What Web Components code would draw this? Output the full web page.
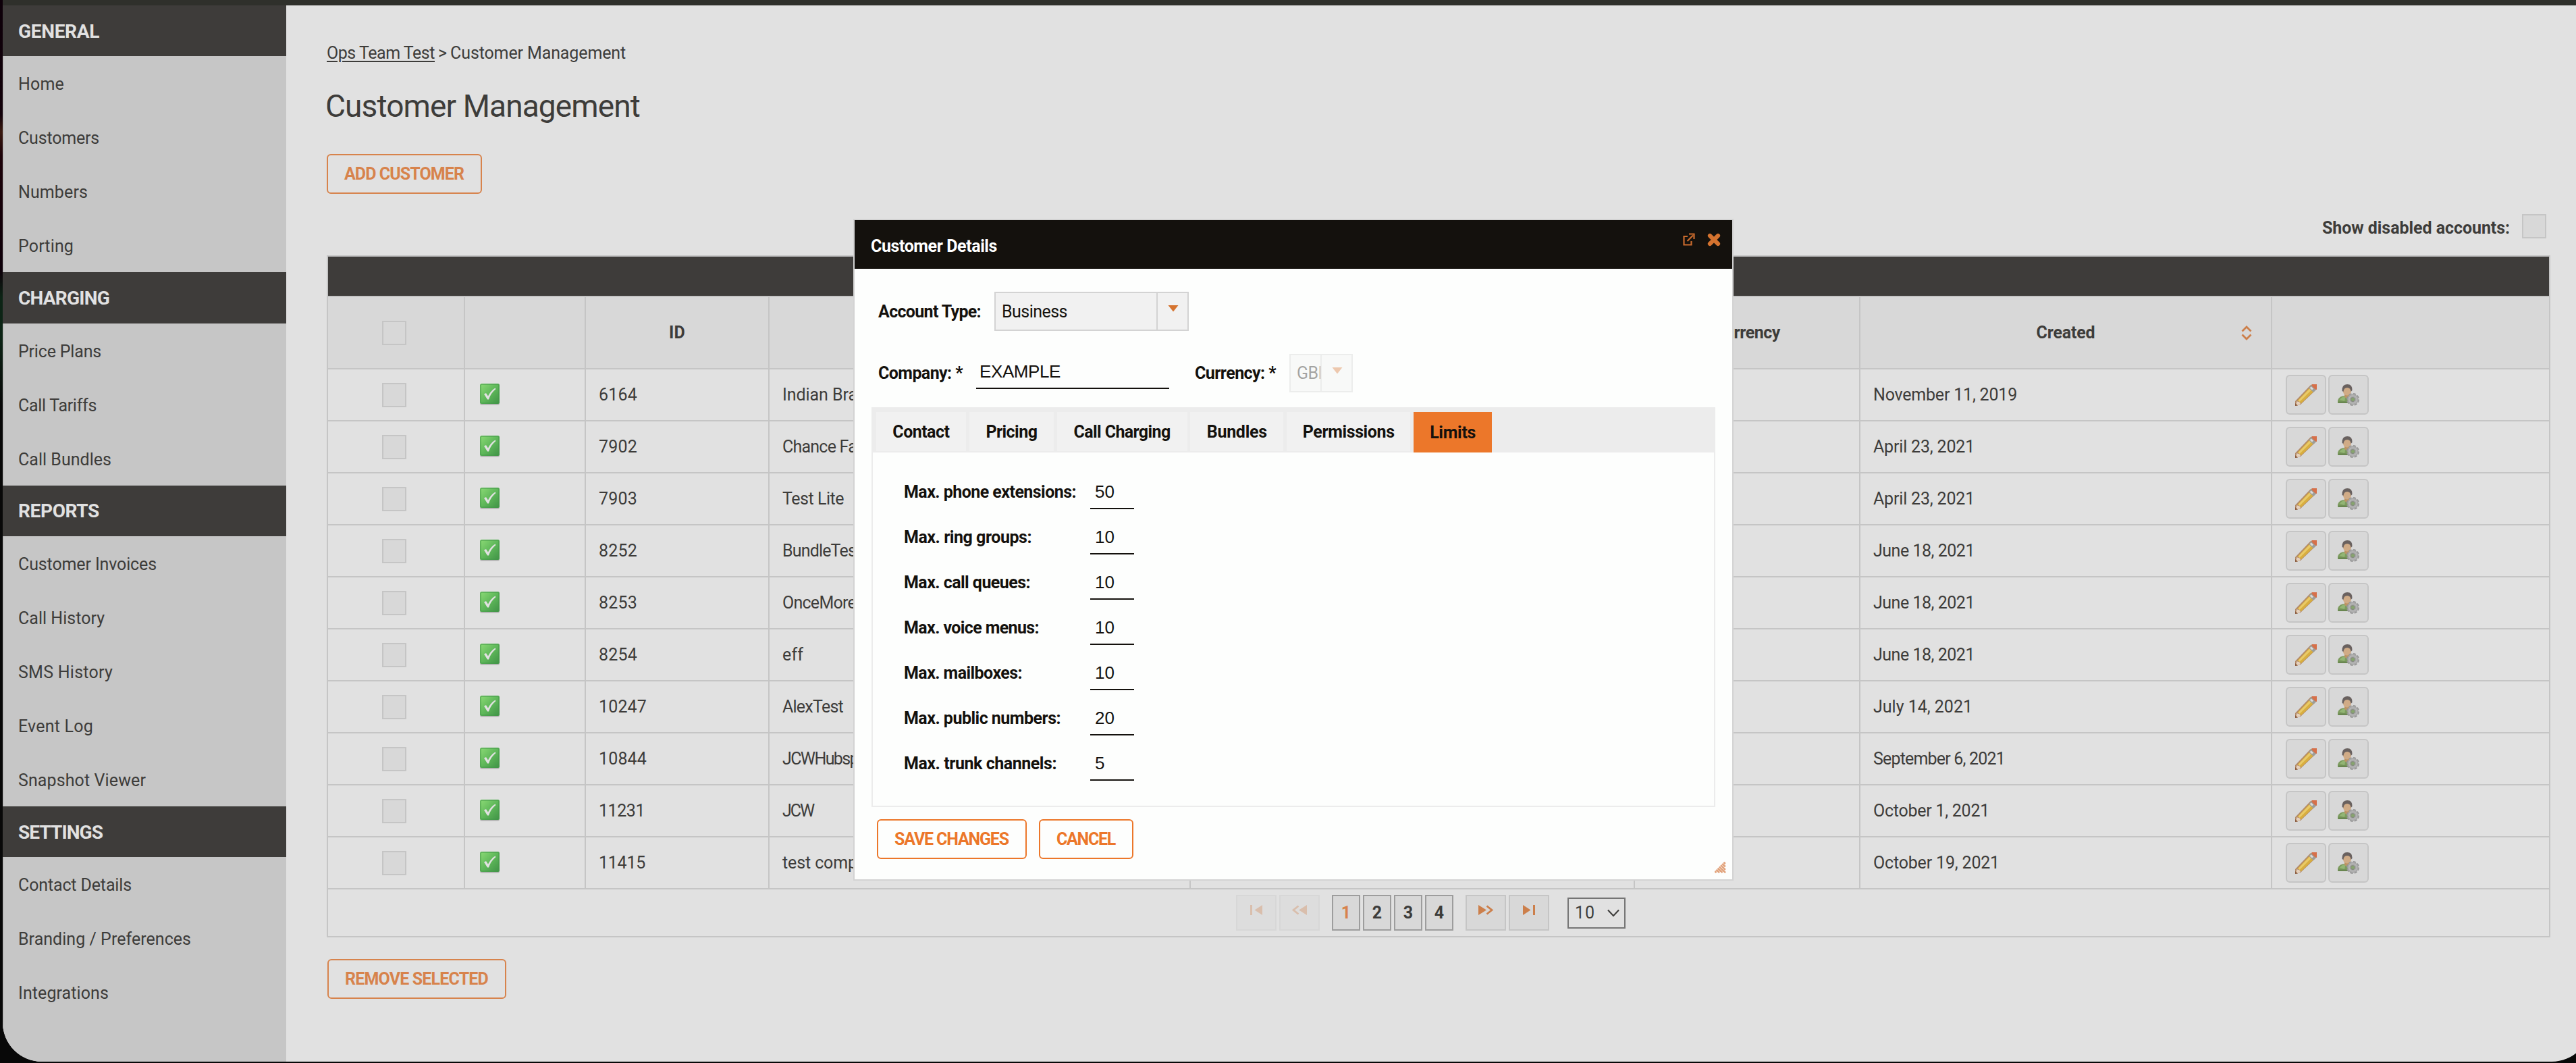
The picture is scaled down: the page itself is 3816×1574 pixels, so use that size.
<!DOCTYPE html>
<html lang="en">
<head>
<meta charset="utf-8">
<title>Customer Management</title>
<style>
body {
  margin: 0;
  background: #090909;
  font-family: Roboto, "Open Sans", sans-serif;
  font-size: 25px;
  color: #3d3c3a;
}
</style>
</head>
<body>
<admin-page></admin-page>
<script>
// Single line of text, tracked so that it fills the given width
class UiText extends HTMLElement {
  constructor() {
    super()
    this.attachShadow({ mode: "open" }).innerHTML = `
    <style>
    :host { display: inline-block; margin-left: -2px; white-space: nowrap; }
    </style><slot></slot>`
  }

  connectedCallback() {
    const width = Number(this.getAttribute("width"))
    const count = this.textContent.length
    if (!width || count < 2) return
    const natural = this.getBoundingClientRect().width
    this.style.letterSpacing = (width - natural + 2) / count + "px"
    this.style.width = width + "px"
  }
}

const icons = {
  check: `<svg width="32" height="34" viewBox="0 0 32 34">
    <defs><linearGradient id="g" x1="0" y1="0" x2="1" y2="1"><stop offset="0" stop-color="#8ddb76"/><stop offset=".5" stop-color="#5fb85a"/><stop offset="1" stop-color="#3f9146"/></linearGradient></defs>
    <rect x="1" y="2" width="29" height="30" rx="3" fill="#999" opacity=".55"/>
    <rect x="1" y="0" width="29" height="30" rx="2.5" fill="url(#g)"/>
    <rect x="2" y="1" width="27" height="28" rx="2" fill="none" stroke="#459a49" stroke-width="1.6" opacity=".65"/>
    <path d="M7 15.500l3-1.500 3 4.500q4-8 10.500-12l1 1.500Q17 14 14 23.500h-2z" fill="#e1e1e1"/></svg>`,
  pencil: `<svg width="32" height="32" viewBox="0 0 32 32">
    <path d="M0 32V25L22.500 1.500Q25 0 28 0h4v7L8 30z" fill="#b28a68"/>
    <path d="M1 31l1.500-5.500 5 4.500z" fill="#e8d6c0"/>
    <path d="M3 24.500L21 5.500l6 5.500L8.500 28.500Q7.500 25 3 24.500z" fill="#d8ae40"/>
    <path d="M4.500 24L21.500 6.500l2.500 2L6.500 26z" fill="#e9ca69"/>
    <path d="M2 25.500q4.500-.5 6 3L3 31z" fill="#e6d1bd"/>
    <path d="M0 32v-4l4 3.500z" fill="#8b5b3e"/>
    <path d="M20 5.500l4-4 7 6.500-4 4z" fill="#9c9d99"/>
    <path d="M21.700 5.600l2-2 3.300 3-2 2z" fill="#dcdcdc"/>
    <path d="M24.500 0H32v8q-2.500 0-5-3-2.500-2-2.500-5z" fill="#d6704a"/></svg>`,
  user: `<svg width="32" height="32" viewBox="0 0 32 32">
    <path d="M0 28V24q2-7 11-7h6q7 1 7 11z" fill="#7c9b5e"/>
    <path d="M3 23q3-5 9-5l-2 7z" fill="#92b574"/>
    <path d="M1 25.500h20V28H1z" fill="#698650"/>
    <path d="M10 15h8v4l-4 2-4-2z" fill="#bd9363"/>
    <circle cx="14" cy="10.500" r="6" fill="#d0ab86"/>
    <path d="M6.500 10Q6 0 14 0t7.500 9l-2 2Q19 5 14 5T8.500 11z" fill="#69615f"/>
    <circle cx="22.500" cy="22.500" r="8.300" fill="none" stroke="#969696" stroke-width="2.500" stroke-dasharray="4.200 2.320"/>
    <circle cx="22.500" cy="22.500" r="5.700" fill="none" stroke="#a7a7a7" stroke-width="5"/>
    <circle cx="22.500" cy="22.500" r="5.600" fill="none" stroke="#bababa" stroke-width="1.200"/>
    <circle cx="22.500" cy="22.500" r="3" fill="#87a46e" stroke="#858585"/></svg>`,
  sort: `<svg width="16" height="22" viewBox="0 0 16 22"><path d="M1.500 8.500L8 2l6.500 6.500M1.500 13.500L8 20l6.500-6.500" fill="none" stroke="#cc7f4b" stroke-width="2.800"/></svg>`,
  popout: `<svg width="18" height="19" viewBox="0 0 18 19"><path d="M7 5H1.500v12.500h11V12M6.500 12L15 3.500M9 1.500h7.500V9" fill="none" stroke="#c96b2d" stroke-width="2.200"/></svg>`,
  close: `<svg width="20" height="20" viewBox="0 0 20 20"><path d="M4 4l12 12M16 4L4 16" stroke="#d5732f" stroke-width="6.200" stroke-linecap="round"/></svg>`,
  down: `<svg width="16" height="10" viewBox="0 0 16 10"><path d="M.5 0h15L8 9.500z" fill="#d5732f"/></svg>`,
  first: `<svg width="20" height="18" viewBox="0 0 20 18"><path d="M1 1h3v15H1zM19 1v15L7.500 8.500z" fill="#cc7f4b"/></svg>`,
  prev: `<svg width="24" height="18" viewBox="0 0 24 18"><path d="M23 1v15L11 8.500z" fill="#cc7f4b"/><path d="M10.500 2.500l-7.500 6 7.500 6" fill="none" stroke="#cc7f4b" stroke-width="2.800"/></svg>`,
  next: `<svg width="24" height="18" viewBox="0 0 24 18"><path d="M1 1v15l12-7.500z" fill="#cc7f4b"/><path d="M13.500 2.500l7.500 6-7.500 6" fill="none" stroke="#cc7f4b" stroke-width="2.800"/></svg>`,
  last: `<svg width="20" height="18" viewBox="0 0 20 18"><path d="M16 1h3v15h-3zM1 1v15l11.500-7.500z" fill="#cc7f4b"/></svg>`,
  chevron: `<svg width="18" height="12" viewBox="0 0 18 12"><path d="M1 1.500l8 8.500 8-8.500" fill="none" stroke="#3d3c3a" stroke-width="2"/></svg>`,
  grip: `<svg width="17" height="17" viewBox="0 0 17 17"><path d="M.5 16L16 .5M5 16L16 5M9.500 16L16 9.500M14 16l2-2" stroke="#e2a37c" stroke-width="3.200" stroke-dasharray="2.600 .5"/></svg>`,
}

class UiIcon extends HTMLElement {
  constructor() {
    super()
    this.attachShadow({ mode: "open" })
  }

  connectedCallback() {
    this.shadowRoot.innerHTML = `
    <style>
    :host { display: block; flex: none; }
    svg { display: block; }
    </style>${icons[this.getAttribute("name")]}`
  }
}

class UiCheckbox extends HTMLElement {
  constructor() {
    super()
    this.attachShadow({ mode: "open" }).innerHTML = `
    <style>
    :host {
      display: block;
      box-sizing: border-box;
      width: 36px;
      height: 36px;
      border: 2px solid #c5c5c5;
      background: #d8d8d8;
    }
    </style>`
  }
}

class UiButton extends HTMLElement {
  constructor() {
    super()
    this.attachShadow({ mode: "open" }).innerHTML = `
    <style>
    :host {
      display: flex;
      box-sizing: border-box;
      width: fit-content;
      height: 59px;
      padding: 0 27px 0 26px;
      border: 2px solid;
      border-radius: 6px;
      align-items: center;
      justify-content: center;
      color: var(--accent, #d7834c);
      font-weight: 700;
    }
    </style><slot></slot>`
  }
}

class NavSection extends HTMLElement {
  constructor() {
    super()
    this.attachShadow({ mode: "open" })
  }

  connectedCallback() {
    const items = this.getAttribute("items").split("|").map(item => item.split("="))
    this.shadowRoot.innerHTML = `
    <style>
    :host { display: block; }
    h2, a {
      display: flex;
      box-sizing: border-box;
      align-items: center;
      margin: 0;
      padding-left: 25px;
    }
    h2 {
      height: 75.3px;
      padding-top: 1px;
      background: #3e3c3a;
      color: #e1e1e1;
      font-size: 28px;
    }
    a { height: 80px; padding-top: 3px; }
    </style>
    <h2><slot></slot></h2>
    ${items.map(([label, width]) => `<a><ui-text width="${width}">${label}</ui-text></a>`).join("")}`
  }
}

class SideNav extends HTMLElement {
  constructor() {
    super()
    this.attachShadow({ mode: "open" }).innerHTML = `
    <style>
    :host { display: block; flex: none; width: 420px; background: #c6c6c6; box-shadow: inset 1px 0 #a7a7a7; }
    </style>
    <nav-section items="Home=66|Customers=118|Numbers=101|Porting=80"><ui-text width="118">GENERAL</ui-text></nav-section>
    <nav-section items="Price Plans=121|Call Tariffs=114|Call Bundles=136"><ui-text width="133">CHARGING</ui-text></nav-section>
    <nav-section items="Customer Invoices=203|Call History=126|SMS History=138|Event Log=109|Snapshot Viewer=187"><ui-text width="118">REPORTS</ui-text></nav-section>
    <nav-section items="Contact Details=166|Branding / Preferences=254|Integrations=132"><ui-text width="123">SETTINGS</ui-text></nav-section>`
  }
}

const customers = [
  ["6164", 55, "Indian Bra", 109, "November 11, 2019", 211],
  ["7902", 55, "Chance Fa", 108, "April 23, 2021", 148],
  ["7903", 55, "Test Lite", 89, "April 23, 2021", 148],
  ["8252", 55, "BundleTes", 107, "June 18, 2021", 148],
  ["8253", 55, "OnceMore", 107, "June 18, 2021", 148],
  ["8254", 55, "eff", 29, "June 18, 2021", 148],
  ["10247", 69, "AlexTest", 88, "July 14, 2021", 145],
  ["10844", 69, "JCWHubsp", 110, "September 6, 2021", 193],
  ["11231", 66, "JCW", 44, "October 1, 2021", 170],
  ["11415", 67, "test comp", 109, "October 19, 2021", 185],
]

class CustomerTable extends HTMLElement {
  constructor() {
    super()
    this.attachShadow({ mode: "open" })
  }

  connectedCallback() {
    this.shadowRoot.innerHTML = `
    <style>
    :host { display: block; border: 2px solid #c5c5c5; }
    .band { height: 58px; background: #3e3c3a; border-bottom: 2px solid #c5c5c5; }
    .row {
      display: grid;
      grid-template-columns: 203px 179px 272px 624px 658px 334px 610px 1fr;
      height: 75px;
      border-bottom: 2px solid #c5c5c5;
    }
    .row > div {
      display: flex;
      align-items: center;
      padding-left: 21px;
      border-right: 2px solid #c5c5c5;
    }
    .row > div:last-child { border-right: 0; }
    .row > div:first-child { padding-left: 80px; }
    .row.head { height: 105px; background: #d8d8d8; font-weight: 700; }
    .head > div + div { padding: 0; justify-content: center; }
    .head .sortable { display: grid; grid-template-columns: 72px 1fr 72px; justify-items: center; }
    .actions { gap: 3px; }
    .action {
      display: flex;
      width: 56px;
      height: 55px;
      margin-left: -1px;
      margin-right: 1px;
      align-items: center;
      justify-content: center;
      border: 2px solid #c5c5c5;
      border-radius: 6px;
      background: #d8d8d8;
    }
    </style>
    <div class="band"></div>
    <div class="row head">
      <div><ui-checkbox></ui-checkbox></div>
      <div></div>
      <div><ui-text width="22">ID</ui-text></div>
      <div></div>
      <div></div>
      <div><ui-text width="96">Currency</ui-text></div>
      <div class="sortable"><span></span><ui-text width="85">Created</ui-text><ui-icon name="sort"></ui-icon></div>
      <div></div>
    </div>
    ${customers.map(([id, idWidth, name, nameWidth, date, dateWidth]) => `
    <div class="row">
      <div><ui-checkbox></ui-checkbox></div>
      <div><ui-icon name="check"></ui-icon></div>
      <div><ui-text width="${idWidth}">${id}</ui-text></div>
      <div><ui-text width="${nameWidth}">${name}</ui-text></div>
      <div></div>
      <div></div>
      <div><ui-text width="${dateWidth}">${date}</ui-text></div>
      <div class="actions">
        <span class="action"><ui-icon name="pencil"></ui-icon></span>
        <span class="action"><ui-icon name="user"></ui-icon></span>
      </div>
    </div>`).join("")}
    <table-pager></table-pager>`
  }
}

class TablePager extends HTMLElement {
  constructor() {
    super()
    this.attachShadow({ mode: "open" }).innerHTML = `
    <style>
    :host { display: flex; height: 69px; align-items: center; padding-left: 1345px; }
    .step, .page, .size {
      display: flex;
      box-sizing: border-box;
      height: 53px;
      margin-right: 4px;
      align-items: center;
      justify-content: center;
      border: 2px solid #c5c5c5;
      background: #d8d8d8;
    }
    .step { width: 60px; padding-bottom: 7px; }
    .off { opacity: .35; }
    .page { width: 42px; border-color: #9d9d9d; font-weight: 700; }
    .current { color: #d7834c; }
    .gap { width: 14px; }
    .size {
      width: 86px;
      height: 46px;
      margin-left: 23px;
      padding: 0 7px 0 11px;
      justify-content: space-between;
      border-color: #757575;
      background: none;
    }
    </style>
    <span class="step off"><ui-icon name="first"></ui-icon></span>
    <span class="step off"><ui-icon name="prev"></ui-icon></span>
    <span class="gap"></span>
    <span class="page current">1</span>
    <span class="page">2</span>
    <span class="page">3</span>
    <span class="page">4</span>
    <span class="gap"></span>
    <span class="step"><ui-icon name="next"></ui-icon></span>
    <span class="step"><ui-icon name="last"></ui-icon></span>
    <span class="size"><ui-text width="28">10</ui-text><ui-icon name="chevron"></ui-icon></span>`
  }
}

class UiSelect extends HTMLElement {
  constructor() {
    super()
    this.attachShadow({ mode: "open" }).innerHTML = `
    <style>
    :host {
      display: flex;
      box-sizing: border-box;
      height: 58px;
      border: 2px solid #d3d3d3;
      background: #f1f1f1;
    }
    :host([disabled]) { opacity: .38; height: 57px; }
    .value {
      display: flex;
      flex: 1;
      min-width: 0;
      align-items: center;
      padding-left: 11px;
      overflow: hidden;
    }
    .arrow {
      display: flex;
      width: 43px;
      justify-content: center;
      padding: 18px 0 0 1px;
      border-left: 2px solid #d3d3d3;
    }
    </style>
    <span class="value"><slot></slot></span>
    <span class="arrow"><ui-icon name="down"></ui-icon></span>`
  }
}

class UiInput extends HTMLElement {
  constructor() {
    super()
    this.attachShadow({ mode: "open" }).innerHTML = `
    <style>
    :host {
      display: block;
      box-sizing: border-box;
      height: 51px;
      padding-left: 7px;
      border-bottom: 2px solid #14110d;
      font: 26px/51px "Liberation Sans", Arial, sans-serif;
    }
    </style><slot></slot>`
  }
}

class TabBar extends HTMLElement {
  constructor() {
    super()
    this.attachShadow({ mode: "open" }).innerHTML = `
    <style>
    :host {
      display: flex;
      box-sizing: border-box;
      height: 67px;
      padding: 7px 0 0 6.500px;
      gap: 4.700px;
      background: #ececec;
      font-weight: 700;
    }
    span {
      display: flex;
      height: 58px;
      align-items: center;
      justify-content: center;
      background: #f1f1f1;
    }
    .active { height: 60px; background: #ec772a; }
    </style>
    <span style="width: 133.700px"><ui-text width="82">Contact</ui-text></span>
    <span style="width: 125px"><ui-text width="74">Pricing</ui-text></span>
    <span style="width: 193px"><ui-text width="141">Call Charging</ui-text></span>
    <span style="width: 138px"><ui-text width="87">Bundles</ui-text></span>
    <span style="width: 183.500px"><ui-text width="134">Permissions</ui-text></span>
    <span class="active" style="width: 116px"><ui-text width="66">Limits</ui-text></span>`
  }
}

const limits = [
  ["Max. phone extensions:", 253, "50"],
  ["Max. ring groups:", 187, "10"],
  ["Max. call queues:", 185, "10"],
  ["Max. voice menus:", 198, "10"],
  ["Max. mailboxes:", 173, "10"],
  ["Max. public numbers:", 230, "20"],
  ["Max. trunk channels:", 224, "5"],
]

class LimitsPanel extends HTMLElement {
  constructor() {
    super()
    this.attachShadow({ mode: "open" })
  }

  connectedCallback() {
    this.shadowRoot.innerHTML = `
    <style>
    :host {
      display: block;
      box-sizing: border-box;
      height: 525px;
      padding: 17px 0 0 48px;
      border: 2px solid #ececec;
      border-top: 0;
    }
    div { display: grid; grid-template-columns: 274px 65px; height: 67px; align-items: end; }
    b { height: 51px; line-height: 52px; }
    </style>
    ${limits.map(([label, width, value]) => `
    <div><b><ui-text width="${width}">${label}</ui-text></b><ui-input>${value}</ui-input></div>`).join("")}`
  }
}

class CustomerDialog extends HTMLElement {
  constructor() {
    super()
    this.attachShadow({ mode: "open" }).innerHTML = `
    <style>
    :host {
      display: block;
      box-sizing: border-box;
      width: 1304px;
      height: 980px;
      border: 2px solid #d3d3d3;
      background: #fdfefd;
      color: #14110d;
      --accent: #ec772a;
    }
    header {
      display: flex;
      box-sizing: border-box;
      height: 72px;
      padding: 0 17px 0 26px;
      background: #14110d;
      color: #fff;
      font-weight: 700;
    }
    header div { flex: 1; line-height: 77px; }
    header ui-icon { margin: 19px 0 0 18px; }
    .line { display: flex; align-items: center; height: 58px; font-weight: 700; }
    .type { margin: 34px 0 0 37px; }
    .company { margin: 33px 0 0 37px; }
    ui-select, ui-input { flex: none; margin-left: 22px; font-weight: 400; }
    .company ui-input { align-self: flex-start; width: 286px; margin-top: 2px; }
    .company ui-select { align-self: flex-start; width: 94px; margin-top: 1px; }
    .type ui-select { width: 288px; }
    .space { width: 40px; }
    .tabs { margin: 22px 25px 0; }
    footer { display: flex; gap: 18px; margin: 18px 0 0 33px; }
    .grip { position: absolute; right: 9px; bottom: 9px; }
    </style>
    <header>
      <div><ui-text width="185">Customer Details</ui-text></div>
      <ui-icon name="popout"></ui-icon>
      <ui-icon name="close"></ui-icon>
    </header>
    <div class="line type">
      <ui-text width="150">Account Type:</ui-text>
      <ui-select><ui-text width="95">Business</ui-text></ui-select>
    </div>
    <div class="line company">
      <ui-text width="123">Company: *</ui-text>
      <ui-input><ui-text width="118">EXAMPLE</ui-text></ui-input>
      <span class="space"></span>
      <ui-text width="118">Currency: *</ui-text>
      <ui-select disabled><ui-text width="45">GBP</ui-text></ui-select>
    </div>
    <div class="tabs">
      <tab-bar></tab-bar>
      <limits-panel></limits-panel>
    </div>
    <footer>
      <ui-button><ui-text width="167">SAVE CHANGES</ui-text></ui-button>
      <ui-button><ui-text width="85">CANCEL</ui-text></ui-button>
    </footer>
    <ui-icon class="grip" name="grip"></ui-icon>`
  }
}

class AdminPage extends HTMLElement {
  constructor() {
    super()
    this.attachShadow({ mode: "open" }).innerHTML = `
    <style>
    :host {
      display: block;
      box-sizing: border-box;
      height: 1574px;
      padding: 0 0 2px 4px;
      overflow: hidden;
      background: linear-gradient(#0d0009, #12010a 170px, #3a1a10 195px, #1d0209 230px, #0d0009 400px, #0c2415 440px, #0c2415 500px, #080808 600px);
    }
    .window {
      width: calc(100% + 22px);
      height: 1572px;
      overflow: hidden;
      border-radius: 0 0 58px 58px;
      background: #e1e1e1;
    }
    .top { height: 8px; background: #2f302b; }
    .body { display: flex; height: 1564px; }
    main { flex: 1; padding: 0 60px; }
    .crumbs { display: flex; gap: 7px; height: 40px; padding-top: 51px; line-height: 40px; }
    .crumbs ui-text:first-child {
      margin-left: 0;
      text-decoration: underline 2px;
      text-underline-offset: 3px;
    }
    h1 { margin: 27px 0 0; font-size: 46px; font-weight: 400; line-height: 62px; }
    .add { margin-top: 40px; }
    .toggle {
      display: flex;
      height: 36px;
      margin: 30px 6px 25px 0;
      gap: 20px;
      justify-content: flex-end;
      align-items: center;
      font-weight: 700;
    }
    .toggle ui-text { padding-top: 4px; }
    .remove { margin: 32px 0 0 1px; }
    customer-dialog { position: absolute; left: 1264px; top: 324px; }
    </style>
    <div class="window">
      <div class="top"></div>
      <div class="body">
        <side-nav></side-nav>
        <main>
          <div class="crumbs"><ui-text width="158">Ops Team Test</ui-text><span>&gt;</span><ui-text width="258">Customer Management</ui-text></div>
          <h1><ui-text width="464">Customer Management</ui-text></h1>
          <ui-button class="add"><ui-text width="175">ADD CUSTOMER</ui-text></ui-button>
          <div class="toggle"><ui-text width="276">Show disabled accounts:</ui-text><ui-checkbox></ui-checkbox></div>
          <customer-table></customer-table>
          <ui-button class="remove"><ui-text width="210">REMOVE SELECTED</ui-text></ui-button>
        </main>
      </div>
    </div>
    <customer-dialog></customer-dialog>`
  }
}

window.customElements.define("ui-text", UiText)
window.customElements.define("ui-icon", UiIcon)
window.customElements.define("ui-checkbox", UiCheckbox)
window.customElements.define("ui-button", UiButton)
window.customElements.define("nav-section", NavSection)
window.customElements.define("side-nav", SideNav)
window.customElements.define("table-pager", TablePager)
window.customElements.define("customer-table", CustomerTable)
window.customElements.define("ui-select", UiSelect)
window.customElements.define("ui-input", UiInput)
window.customElements.define("tab-bar", TabBar)
window.customElements.define("limits-panel", LimitsPanel)
window.customElements.define("customer-dialog", CustomerDialog)
window.customElements.define("admin-page", AdminPage)
</script>
</body>
</html>
